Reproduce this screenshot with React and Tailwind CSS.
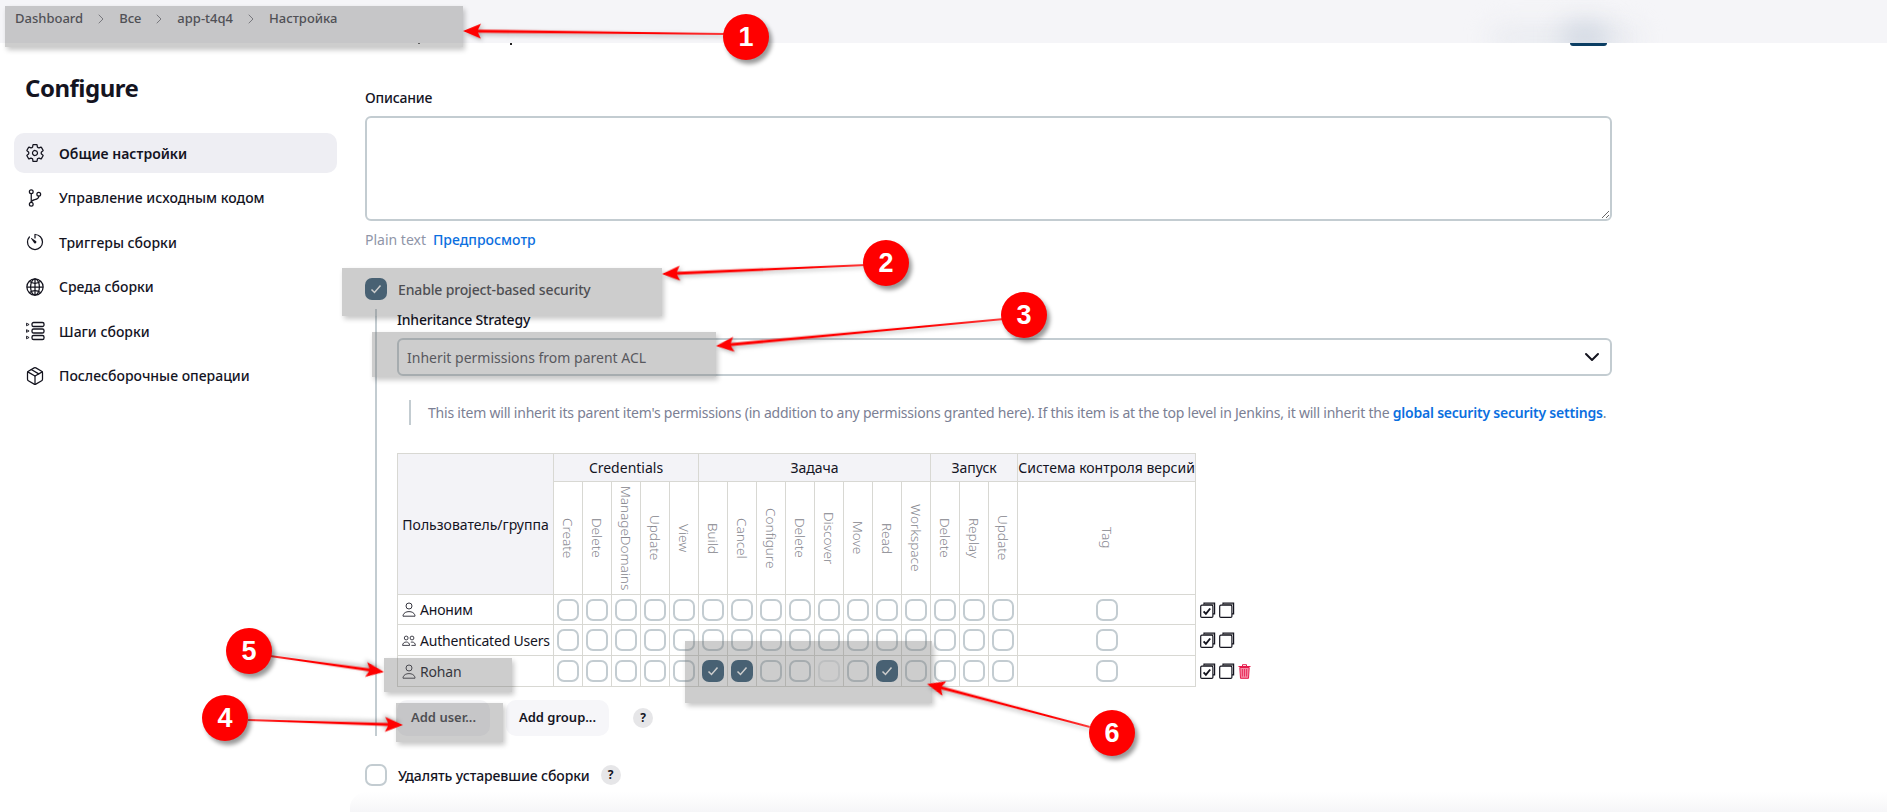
import React from "react";
import { IoSettingsOutline, IoGitBranchOutline, IoTimerOutline, IoGlobeOutline } from "react-icons/io5";
import { Package, ChevronDown, ChevronRight } from "lucide-react";

const StepsIcon = () => (
  <svg width="20" height="20" viewBox="0 0 20 20" fill="none" stroke="#14141f" strokeWidth="1.3">
    <rect x="7" y="1.5" width="12" height="4" rx="1.6" />
    <rect x="7" y="8" width="12" height="4" rx="1.6" />
    <rect x="7" y="14.5" width="12" height="4" rx="1.6" />
    <path d="M1.5 2.2l2.6 1.3-2.6 1.3zM1.5 8.7l2.6 1.3-2.6 1.3zM1.5 15.2l2.6 1.3-2.6 1.3z" strokeWidth="0.9" />
  </svg>
);

const UserIcon = () => (
  <svg width="14" height="15" viewBox="0 0 14 15" fill="none" stroke="#14141f" strokeWidth="0.85" className="shrink-0">
    <circle cx="7" cy="4" r="3" />
    <path d="M1 14.2c0-.4 0-1 .3-1.5C2 10.9 4 9.6 7 9.6s5 1.3 5.7 3.1c.3.5.3 1.1.3 1.5z" />
  </svg>
);

const GroupIcon = () => (
  <svg width="14" height="15" viewBox="0 0 14 15" fill="none" stroke="#14141f" strokeWidth="0.8" className="shrink-0">
    <circle cx="4.2" cy="5" r="1.9" />
    <circle cx="10" cy="5" r="1.9" />
    <path d="M.6 12.4c0-2 1.6-3.4 3.6-3.4s3.4 1.4 3.4 3.4z" />
    <path d="M8.8 9.2c.4-.1.8-.2 1.2-.2 2 0 3.4 1.4 3.4 3.4h-4" />
  </svg>
);

const nav = [
  ["Общие настройки", <IoSettingsOutline size={20} />, true],
  ["Управление исходным кодом", <IoGitBranchOutline size={20} />],
  ["Триггеры сборки", <IoTimerOutline size={20} />],
  ["Среда сборки", <IoGlobeOutline size={20} />],
  ["Шаги сборки", <StepsIcon />],
  ["Послесборочные операции", <Package size={20} strokeWidth={1.5} />],
];

const groups = [
  ["Credentials", ["Create", "Delete", "ManageDomains", "Update", "View"]],
  ["Задача", ["Build", "Cancel", "Configure", "Delete", "Discover", "Move", "Read", "Workspace"]],
  ["Запуск", ["Delete", "Replay", "Update"]],
  ["Система контроля версий", ["Tag"]],
];
const perms = groups.flatMap((g) => g[1]);

const rows = [
  ["Аноним", "user", [], false],
  ["Authenticated Users", "group", [], false],
  ["Rohan", "user", [5, 6, 11], true],
];

const Box = ({ checked, faint }) =>
  checked ? (
    <span className="inline-flex w-[22px] h-[22px] rounded-[7px] bg-[#335a75] items-center justify-center align-middle">
      <svg width="12" height="12" viewBox="0 0 12 12" fill="none" stroke="#fff" strokeWidth="1.5">
        <path d="M1.5 6.5l3 3L10.5 2.5" />
      </svg>
    </span>
  ) : (
    <span className={"inline-block w-[22px] h-[22px] rounded-[7px] border-2 border-[#c3ccd1] bg-white align-middle " + (faint ? "opacity-40" : "")} />
  );

const SelectIcon = ({ checked }) => (
  <svg width="16" height="16" viewBox="0 0 16 16" fill="none" stroke="#14141f" strokeWidth="1.2">
    <path d="M4 2.5V1.2h10.6v10.6H13" />
    <path d="M3 2.6h10.8" stroke="#777" />
    <rect x="0.7" y="3.2" width="12.2" height="12.2" rx="1.2" fill="#fff" />
    {checked && <path d="M3.6 9.4l2.3 2.5 4.3-5.4" strokeWidth="1.9" />}
  </svg>
);

const Trash = () => (
  <svg width="13" height="15" viewBox="0 0 13 15" fill="none">
    <path d="M4.5 2V.7h4V2M.5 2.5h12" stroke="#e6194b" strokeWidth="1" />
    <path d="M1.8 3.5h9.4l-.7 10.8H2.5z" fill="#f58ba5" stroke="#e6194b" strokeWidth="1" />
    <path d="M4.4 5v7.5M6.5 5v7.5M8.6 5v7.5" stroke="#e6194b" strokeWidth="0.8" />
  </svg>
);

const Overlay = ({ className }) => (
  <div className={"absolute bg-[#6f6f6f]/35 shadow-[2px_3px_5px_rgba(0,0,0,0.22)] " + className} />
);

const Arrow = ({ tip, from }) => {
  const dx = from[0] - tip[0];
  const dy = from[1] - tip[1];
  const L = Math.hypot(dx, dy);
  const a = (Math.atan2(dy, dx) * 180) / Math.PI;
  return (
    <polygon
      points={`0,0 18,-7.5 15,-1.6 ${L},-0.8 ${L},0.8 15,1.6 18,7.5`}
      fill="#ff0000"
      transform={`translate(${tip[0]} ${tip[1]}) rotate(${a})`}
      style={{ filter: "drop-shadow(2px 2px 2px rgba(0,0,0,0.3))" }}
    />
  );
};

const Badge = ({ n, className }) => (
  <div className={"absolute w-[46px] h-[46px] rounded-full bg-[#ff0000] text-white text-[27px] font-bold flex items-center justify-center shadow-[3px_4px_4px_rgba(0,0,0,0.4)] font-['Liberation_Sans',sans-serif] " + className}>
    {n}
  </div>
);

const Help = () => (
  <span className="inline-flex w-5 h-5 rounded-full bg-[#e6e6e8] text-[#14141f] text-[12px] font-bold items-center justify-center">?</span>
);

export default function App() {
  return (
    <div className="relative w-full h-[812px] overflow-hidden bg-white text-[#14141f] text-[14px] font-['Noto_Sans',sans-serif]">
      <header className="relative h-[43px] bg-[#f5f5f8] overflow-hidden flex items-center pl-[15px] pb-[6px] text-[13px] font-medium text-[#3f3f48]">
        <div className="absolute left-[1490px] top-[26px] w-[150px] h-[24px] bg-[#e9ebf0] blur-md rounded-full" />
        <div className="absolute left-[1560px] top-[22px] w-[50px] h-[30px] bg-[#d3d9e3] blur-md rounded-full" />
        <span>Dashboard</span>
        <ChevronRight size={16} strokeWidth={1} className="mx-[10px]" />
        <span>Все</span>
        <ChevronRight size={16} strokeWidth={1} className="mx-[10px]" />
        <span>app-t4q4</span>
        <ChevronRight size={16} strokeWidth={1} className="mx-[10px]" />
        <span>Настройка</span>
      </header>

      <div className="absolute left-[1570px] top-[43px] w-[37px] h-[3px] bg-[#0b3e63] rounded-b-full" />
      <div className="absolute left-[418px] top-[43px] w-[2px] h-[1px] bg-[#555]" />
      <div className="absolute left-[510px] top-[43px] w-[2px] h-[2px] bg-[#222]" />

      <div className="flex">
        <aside className="w-[365px] shrink-0 pl-[14px] pr-[28px] pt-[29px]">
          <h1 className="pl-[11px] text-[24px] leading-8 font-bold tracking-[-0.5px] mb-[29px]">Configure</h1>
          <nav className="flex flex-col gap-[4.6px]">
            {nav.map(([t, icon, active]) => (
              <div key={t} className={"h-10 flex items-center gap-[14px] pl-[11px] rounded-[10px] " + (active ? "bg-[#eeeef3] font-semibold" : "font-medium")}>
                <span className="w-5 h-5 flex items-center justify-center shrink-0">{icon}</span>
                <span>{t}</span>
              </div>
            ))}
          </nav>
        </aside>

        <main className="w-[1247px] pt-[45px]">
          <label className="block h-5 leading-5 font-medium tracking-[-0.2px]">Описание</label>
          <textarea className="block mt-[8px] w-full h-[105px] border-2 border-[#c3ccd1] rounded-[6px] bg-white" />
          <div className="mt-[9px] h-5 leading-5 flex gap-[7px]">
            <span className="text-[#8f95a8]">Plain text</span>
            <span className="text-[#0b6fe0] font-medium">Предпросмотр</span>
          </div>

          <div className="mt-[28px] h-[22px] flex items-center gap-[11px]">
            <Box checked />
            <span className="font-medium text-[#3c3c44] tracking-[-0.15px]">Enable project-based security</span>
          </div>

          <div className="mt-[9px] ml-[10px] pl-[20px] pt-[1px] border-l-2 border-[#c3ccd1]">
            <div className="h-5 leading-5 font-medium tracking-[-0.2px]">Inheritance Strategy</div>
            <div className="mt-[8px] h-[38px] border-2 border-[#c3ccd1] rounded-[6px] flex items-center justify-between pl-[8px] pr-[6px] text-[#4c4c55]">
              <span>Inherit permissions from parent ACL</span>
              <ChevronDown size={24} strokeWidth={2} className="text-[#14141f]" />
            </div>

            <div className="mt-[24px] ml-[12px] h-[25px] border-l-2 border-[#c3ccd1] pl-[17px] flex items-center text-[#7b8094] whitespace-nowrap tracking-[-0.22px]">
              <span>
                This item will inherit its parent item's permissions (in addition to any permissions granted here). If this item is at the top level in Jenkins, it will inherit the{" "}
                <span className="text-[#0b6fe0] font-semibold">global security security settings</span>.
              </span>
            </div>

            <table className="mt-[28px] border-collapse table-fixed w-[858px]">
              <colgroup>
                <col className="w-[156px]" />
                {perms.slice(0, -1).map((p, i) => (
                  <col key={i} className="w-[29px]" />
                ))}
                <col className="w-[178px]" />
                <col className="w-[60px]" />
              </colgroup>
              <thead>
                <tr className="h-[28px]">
                  <th rowSpan={2} className="border border-[#d8d8d3] bg-[#f3f3f7] font-normal">Пользователь/группа</th>
                  {groups.map(([g, cols]) => (
                    <th key={g} colSpan={cols.length} className="border border-[#d8d8d3] bg-[#f3f3f7] font-normal whitespace-nowrap">{g}</th>
                  ))}
                </tr>
                <tr className="h-[113px]">
                  {perms.map((p, i) => (
                    <th key={i} className="border border-[#d8d8d3] font-light text-[#85858d] text-[13.5px]">
                      <div className="flex items-center justify-center">
                        <span className="[writing-mode:vertical-rl]">{p}</span>
                      </div>
                    </th>
                  ))}
                </tr>
              </thead>
              <tbody>
                {rows.map(([name, kind, on, del], r) => (
                  <tr key={name} className={r === 0 ? "h-[30px]" : "h-[31px]"}>
                    <td className="border border-[#d8d8d3] pl-[4px] whitespace-nowrap">
                      <span className="flex items-center gap-[4px] tracking-[-0.2px]">
                        {kind === "user" ? <UserIcon /> : <GroupIcon />}
                        {name}
                      </span>
                    </td>
                    {perms.map((p, i) => (
                      <td key={i} className="border border-[#d8d8d3] text-center leading-none">
                        <Box checked={on.includes(i)} faint={del && i === 9} />
                      </td>
                    ))}
                    <td className="pl-[4px]">
                      <span className="flex items-center gap-[3px]">
                        <SelectIcon checked />
                        <SelectIcon />
                        {del && <span className="flex"><Trash /></span>}
                      </span>
                    </td>
                  </tr>
                ))}
              </tbody>
            </table>

            <div className="mt-[13px] flex items-center">
              <button className="w-[93px] h-[36px] rounded-[10px] bg-[#f4f4f7] text-[13px] font-semibold text-[#3c3c44]">Add user...</button>
              <button className="ml-[16px] w-[103px] h-[36px] rounded-[10px] bg-[#f6f6f9] text-[13px] font-semibold">Add group...</button>
              <span className="ml-[24px] flex"><Help /></span>
            </div>
          </div>

          <div className="mt-[28px] h-[22px] flex items-center gap-[11px]">
            <Box />
            <span className="font-medium tracking-[-0.1px]">Удалять устаревшие сборки</span>
            <Help />
          </div>
        </main>
      </div>

      <div className="absolute left-[350px] right-0 bottom-0 h-[20px] bg-gradient-to-b from-white to-[#f6f6f8] rounded-tl-[16px]" />

      <Overlay className="left-[5px] top-[6px] w-[458px] h-[41px]" />
      <Overlay className="left-[342px] top-[268px] w-[320px] h-[48px]" />
      <Overlay className="left-[372px] top-[332px] w-[344px] h-[45px]" />
      <Overlay className="left-[396px] top-[703px] w-[107px] h-[39px]" />
      <Overlay className="left-[384px] top-[658px] w-[128px] h-[34px]" />
      <Overlay className="left-[685px] top-[641px] w-[247px] h-[62px]" />

      <svg className="absolute inset-0 pointer-events-none" width="1887" height="812">
        <Arrow tip={[463, 31]} from={[725, 34]} />
        <Arrow tip={[662, 274]} from={[866, 265]} />
        <Arrow tip={[716, 346]} from={[1004, 319]} />
        <Arrow tip={[403, 725]} from={[248, 720]} />
        <Arrow tip={[384, 672]} from={[270, 656]} />
        <Arrow tip={[927, 684]} from={[1090, 727]} />
      </svg>

      <Badge n="1" className="left-[723px] top-[14px]" />
      <Badge n="2" className="left-[863px] top-[240px]" />
      <Badge n="3" className="left-[1001px] top-[292px]" />
      <Badge n="4" className="left-[202px] top-[695px]" />
      <Badge n="5" className="left-[226px] top-[628px]" />
      <Badge n="6" className="left-[1089px] top-[710px]" />
    </div>
  );
}
